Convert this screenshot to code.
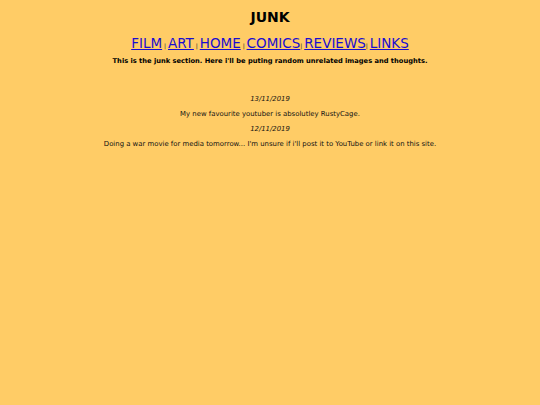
export default function App() {
  const links = [
    { t: "FILM", sep: " " },
    { t: "ART", sep: " " },
    { t: "HOME", sep: " " },
    { t: "COMICS", sep: "" },
    { t: "REVIEWS", sep: "" },
    { t: "LINKS", sep: null },
  ];
  return (
    <div className="min-h-screen w-full bg-[#ffcc66] text-center text-black font-['DejaVu_Sans',Verdana,sans-serif]">
      <h1 className="pt-[10px] text-[14px] leading-[14px] font-bold">JUNK</h1>
      <div className="mt-[10px] text-[13.5px] leading-[18px]">
        {links.map((l, i) => (
          <span key={i}>
            <a href="#" className="text-[#1a0dd0] underline">{l.t}</a>
            {l.sep !== null && (
              <span className="text-[6px] text-[#222]">
                {l.sep}|{" "}
              </span>
            )}
          </span>
        ))}
      </div>
      <p className="mt-[1px] text-[6.7px] leading-[10px] font-bold">
        This is the junk section. Here i'll be puting random unrelated images and thoughts.
      </p>
      <div className="mt-[26px] text-[6.9px] leading-[15px] text-[#111]">
        <p className="italic">13/11/2019</p>
        <p>My new favourite youtuber is absolutley RustyCage.</p>
        <p className="italic">12/11/2019</p>
        <p>Doing a war movie for media tomorrow... I'm unsure if i'll post it to YouTube or link it on this site.</p>
      </div>
    </div>
  );
}
